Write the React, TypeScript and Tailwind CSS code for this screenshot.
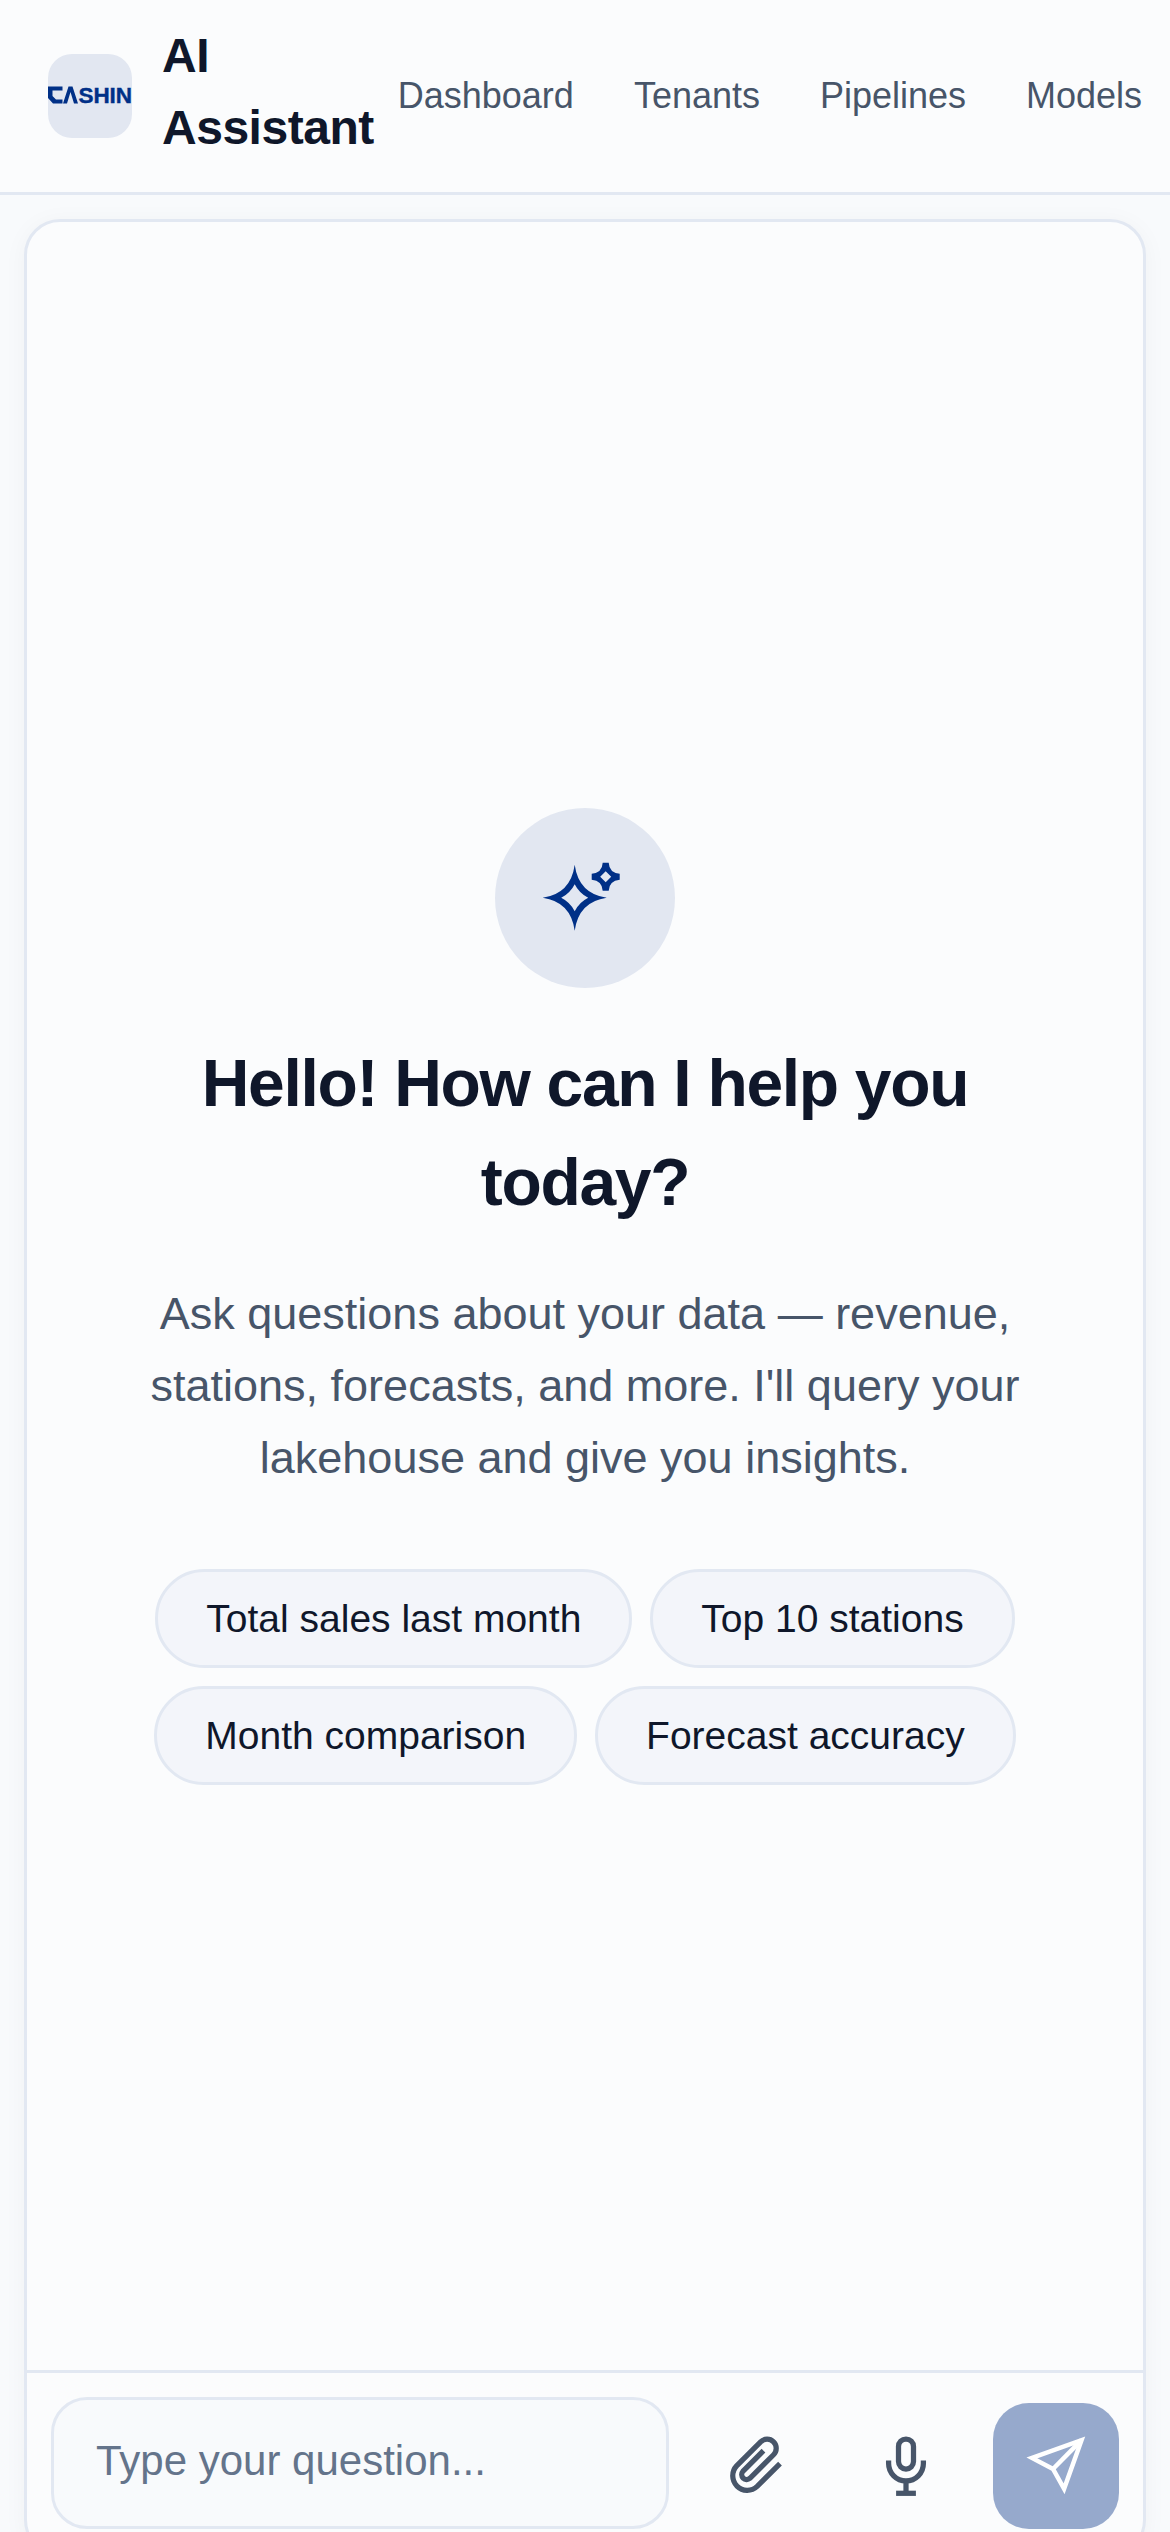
import { useState } from "react";

const navItems = ["Dashboard", "Tenants", "Pipelines", "Models"];
const prompts = ["Total sales last month", "Top 10 stations", "Month comparison", "Forecast accuracy"];

function Logo() {
  return (
    <div className="size-[84px] shrink-0 overflow-hidden rounded-[24px] bg-[#e2e7f1]">
      <svg viewBox="0 0 84 84" width="84" height="84" fill="#003087">
        <polygon points="0,32.5 14.5,32.5 14.5,36.5 4.5,36.5 4.5,42 8,45.5 14.5,45.5 14.5,49.5 5,49.5 0,44" />
        <polygon points="15,49.5 20.5,32.5 24.5,32.5 30,49.5 26,49.5 22.5,38 19,49.5" />
        <text
          x="30.5"
          y="49.3"
          fontFamily="'Liberation Sans', sans-serif"
          fontWeight="700"
          fontSize="22.5"
          textLength="53.5"
          stroke="#003087"
          strokeWidth="0.4"
        >
          SHIN
        </text>
      </svg>
    </div>
  );
}

function SparkIcon() {
  return (
    <svg viewBox="0 0 72 72" width="72" height="72" fill="#003087" fillRule="evenodd" className="overflow-visible">
      <g transform="translate(25.7 35.7)">
        <path d="M0 -33Q4 -4 32 0Q4 4 0 33Q-4 4 -32 0Q-4 -4 0 -33ZM0 -13.5Q4.5 -4.5 13.5 0Q4.5 4.5 0 13.5Q-4.5 4.5 -13.5 0Q-4.5 -4.5 0 -13.5Z" />
      </g>
      <g transform="translate(56.7 14.7)">
        <path d="M-3 -14H3Q3.5 -4 14 -3V3Q3.5 4 3 14H-3Q-3.5 4 -14 3V-3Q-3.5 -4 -3 -14ZM0 -5.5L5.5 0L0 5.5L-5.5 0Z" />
      </g>
    </svg>
  );
}

function ClipIcon() {
  return (
    <svg viewBox="0 0 24 24" width="72" height="72" fill="none" stroke="#475569" strokeWidth="1.75">
      <path d="M20 11.2L12.38 18.81A4.84 4.84 0 0 1 5.54 11.97L13.55 3.95A3.04 3.04 0 0 1 17.85 8.25L9.97 16.12A1.66 1.66 0 0 1 7.63 13.78L14.5 6.9" />
    </svg>
  );
}

function MicIcon() {
  return (
    <svg viewBox="0 0 24 24" width="72" height="72" fill="none" stroke="#475569" strokeWidth="1.75">
      <path d="M12 3a2.5 2.5 0 0 0-2.5 2.5v5a2.5 2.5 0 0 0 5 0v-5A2.5 2.5 0 0 0 12 3Z" />
      <path d="M6.2 10.2v1a5.8 5.8 0 0 0 11.6 0v-1" />
      <path d="M12 17.2v4" />
      <path d="M8.7 21.1h6.6" />
    </svg>
  );
}

function SendIcon() {
  return (
    <svg viewBox="0 0 24 24" width="72" height="72" fill="none" stroke="#ffffff" strokeWidth="1.5" strokeMiterlimit="10">
      <polygon points="20.5 3.4 14.7 19.6 11 13 4 9.3" />
      <path d="M20.5 3.4L11 13" />
    </svg>
  );
}

export default function App() {
  const [question, setQuestion] = useState("");

  return (
    <div className="flex h-[2532px] flex-col overflow-hidden bg-[#f8fafc] font-['Liberation_Sans',sans-serif] leading-[1.6] text-[#0f172a]">
      {/* Top bar */}
      <header className="flex h-[195px] shrink-0 items-center gap-6 overflow-hidden border-b-[3px] border-[#e2e8f2] bg-[#fbfcfd] pl-12">
        <div className="flex shrink-0 items-center gap-[30px]">
          <Logo />
          <h1 className="mb-2 w-min text-[48px] leading-[72px] font-bold tracking-[-0.48px]">AI Assistant</h1>
        </div>
        <nav className="flex shrink-0 items-center gap-[60px] text-[36px] text-[#475569]">
          {navItems.map((item) => (
            <a key={item} href="#">
              {item}
            </a>
          ))}
        </nav>
      </header>

      <main className="p-6">
        <section className="overflow-hidden rounded-[36px] border-[3px] border-[#e2e8f2] bg-[#fbfcfd] shadow-[0_3px_24px_rgba(15,23,42,0.04)]">
          {/* Empty state */}
          <div className="flex h-[2148px] flex-col items-center justify-center text-center">
            <div className="flex size-[180px] items-center justify-center rounded-full bg-[#e2e7f1]">
              <SparkIcon />
            </div>
            <h2 className="mt-[46px] max-w-[960px] text-[66px] leading-[99px] font-bold tracking-[-1.32px]">
              Hello! How can I help you today?
            </h2>
            <p className="mt-[46px] max-w-[960px] text-[45px] leading-[72px] text-[#475569]">
              Ask questions about your data — revenue, stations, forecasts, and more. I'll query your lakehouse and give
              you insights.
            </p>
            <div className="mt-[75px] flex max-w-[960px] flex-wrap justify-center gap-[18px]">
              {prompts.map((prompt) => (
                <button
                  key={prompt}
                  className="rounded-full border-[3px] border-[#e2e8f2] bg-[#f3f5fa] px-12 py-[15px] text-[39px] leading-[63px]"
                >
                  {prompt}
                </button>
              ))}
            </div>
          </div>

          {/* Composer */}
          <div className="flex items-end gap-6 border-t-[3px] border-[#e2e8f2] p-6">
            <input
              value={question}
              onChange={(e) => setQuestion(e.target.value)}
              placeholder="Type your question..."
              className="h-[132px] min-w-0 flex-1 rounded-[36px] border-[3px] border-[#e2e8f2] bg-[#f8fafc] px-[42px] pb-1 text-[42px] outline-none placeholder:text-[#64748b]"
            />
            <button className="flex size-[126px] shrink-0 items-center justify-center rounded-[36px]">
              <ClipIcon />
            </button>
            <button className="flex size-[126px] shrink-0 items-center justify-center rounded-[36px]">
              <MicIcon />
            </button>
            <button className="flex size-[126px] shrink-0 items-center justify-center rounded-[36px] bg-[#96a9cc]">
              <SendIcon />
            </button>
          </div>
        </section>
      </main>
    </div>
  );
}
